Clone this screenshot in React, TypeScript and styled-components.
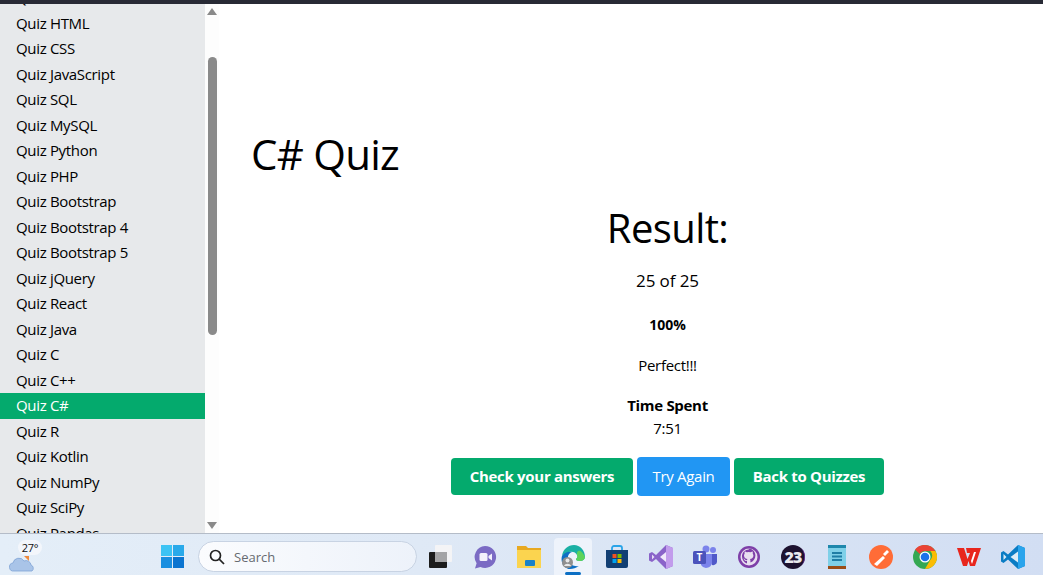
import React from "react";
import styled, { createGlobalStyle } from "styled-components";

const Global = createGlobalStyle`
  html, body { margin: 0; padding: 0; height: 100%; overflow: hidden; background: #fff; }
  #root { height: 100%; }
  * { box-sizing: border-box; }
`;
const FONT = `"Open Sans", "Noto Sans", sans-serif`;

const Page = styled.div`
  width: 1043px; height: 575px; display: flex; flex-direction: column; overflow: hidden;
  font-family: ${FONT}; color: #000;
`;
const TopBar = styled.div`height: 4px; background: #282a35; flex: none;`;
const Body = styled.div`flex: 1; display: flex; min-height: 0;`;
const Sidebar = styled.nav`width: 205px; flex: none; background: #e7e9eb; overflow: hidden;`;
const SideList = styled.ul`list-style: none; margin: -18.6px 0 0; padding: 0;`;
const SideItem = styled.li<{ $active?: boolean }>`
  height: 25.5px; line-height: 25.5px; padding-left: 16px; font-size: 15px; letter-spacing: -0.33px;
  white-space: nowrap;
  background: ${p => (p.$active ? "#04aa6d" : "transparent")};
  color: ${p => (p.$active ? "#fff" : "#000")};
`;
const ScrollBar = styled.div`
  width: 14px; flex: none; background: #fdfdfd; display: flex; flex-direction: column; align-items: center;
`;
const Arrow = styled.svg`width: 10px; height: 7px; flex: none; display: block; margin: 4px 0;`;
const Track = styled.div`flex: 1; width: 100%; padding: 38px 2px 183px 3px; display: flex;`;
const Thumb = styled.div`flex: 1; background: #8a8a8a; border-radius: 5px;`;
const Main = styled.main`flex: 1; display: flex; flex-direction: column; min-width: 0; padding: 123px 0 0 32px;`;
const Title = styled.h1`margin: 0; font-weight: 400; font-size: 42px; letter-spacing: -0.75px; line-height: 54px; color: #000;`;
const Result = styled.section`
  margin: 20px 0 0 41px; display: flex; flex-direction: column; align-items: center;
`;
const ResultTitle = styled.h2`margin: 0; font-weight: 400; font-size: 40px; letter-spacing: -0.6px; line-height: 54px;`;
const Score = styled.p`margin: 14px 0 0; font-size: 17px; line-height: 24px; letter-spacing: -0.1px;`;
const Percent = styled.p`margin: 22px 0 0; font-size: 14px; font-weight: 700; line-height: 20px; letter-spacing: 0;`;
const Verdict = styled.p`margin: 20px 0 0; font-size: 15px; line-height: 20px; letter-spacing: -0.3px;`;
const TimeLabel = styled.p`margin: 20px 0 0; font-size: 15px; font-weight: 700; line-height: 20px; letter-spacing: -0.3px;`;
const TimeValue = styled.p`margin: 3px 0 0; font-size: 15px; line-height: 20px; letter-spacing: -0.3px;`;
const Buttons = styled.div`margin-top: 19px; display: flex; gap: 4px; align-items: center;`;
const Button = styled.button<{ $blue?: boolean; $w: number }>`
  width: ${p => p.$w}px; height: ${p => (p.$blue ? 39 : 37)}px;
  border: 0; border-radius: 4px; padding: 0 0 2px; color: #fff; font-family: ${FONT}; font-size: 15px;
  letter-spacing: -0.3px;
  background: ${p => (p.$blue ? "#2196f3" : "#04aa6d")};
  font-weight: ${p => (p.$blue ? 400 : 700)};
`;
const Taskbar = styled.footer`
  height: 42px; flex: none; border-top: 1px solid #b4bcc8; padding-top: 4px;
  background: linear-gradient(90deg, #e4eef8 0%, #dfe9f6 40%, #d2def3 100%);
  display: flex; align-items: center;
`;
const Weather = styled.div`width: 161px; flex: none; padding: 13px 0 0 9px; display: flex; position: relative; height: 100%; align-items: center;`;
const Temp = styled.span`
  position: absolute; left: 18px; top: 2px; width: 24px; height: 15px; border-radius: 8px; background: #f3f6fb;
  font-size: 11px; line-height: 15px; text-align: center; color: #111; letter-spacing: -0.2px;
`;
const StartSlot = styled.div`width: 37px; flex: none; display: flex;`;
const SearchBox = styled.div`
  width: 219px; height: 31px; flex: none; border-radius: 16px; border: 1px solid #c8d3e3;
  background: linear-gradient(90deg, #fbfcfe, #edf2fa);
  display: flex; align-items: center; gap: 9px; padding-left: 10px;
  font-size: 13px; color: #666a70;
`;
const Tray = styled.div`display: flex; margin-left: 2px; height: 100%;`;
const Slot = styled.div<{ $active?: boolean }>`
  width: 44px; height: 100%; display: flex; align-items: center; justify-content: center;
  position: relative;
  &::before {
    content: ""; position: absolute; left: 3px; right: 3px; top: 0; bottom: 0;
    border-radius: 4px 4px 0 0; display: ${p => (p.$active ? "block" : "none")};
    background: #eef3fb;
  }
  &::after {
    content: ""; position: absolute; left: 14px; right: 14px; bottom: 0; height: 3px; border-radius: 2px;
    display: ${p => (p.$active ? "block" : "none")}; background: #0c6fc4;
  }
  svg { position: relative; z-index: 1; }
`;

const items = ["Quiz Excel","Quiz HTML","Quiz CSS","Quiz JavaScript","Quiz SQL","Quiz MySQL","Quiz Python","Quiz PHP","Quiz Bootstrap","Quiz Bootstrap 4","Quiz Bootstrap 5","Quiz jQuery","Quiz React","Quiz Java","Quiz C","Quiz C++","Quiz C#","Quiz R","Quiz Kotlin","Quiz NumPy","Quiz SciPy","Quiz Pandas"];

const Ico: React.FC<{ children: React.ReactNode }> = ({ children }) => (
  <svg width="24" height="24" viewBox="0 0 24 24">{children}</svg>
);

const icons: React.ReactNode[] = [
  <Ico key="copy"><rect x="0" y="7" width="18" height="16" rx="1" fill="#1c1c1c"/><rect x="6" y="0" width="17" height="17" rx="1" fill="#f4f4f6"/><rect x="6" y="7" width="12" height="10" fill="#a4a4a6"/></Ico>,
  <Ico key="meet"><path d="M12 1a11 11 0 1 1-4.500 21L2 23.500l1.600-5.300A11 11 0 0 1 12 1z" fill="#7b6bc4"/><rect x="6.500" y="8" width="8" height="8" rx="1.500" fill="#f3f1fb"/><path d="M15.500 11l3.500-2.500v7L15.500 13z" fill="#f3f1fb"/></Ico>,
  <Ico key="folder"><path d="M0 1h9l2 2h13v20H0z" fill="#e8a920"/><path d="M0 5h24v18H0z" fill="#fbd44f"/><rect x="8" y="15" width="10" height="6" rx="1" fill="#1b82c6"/></Ico>,
  <Ico key="edge"><path d="M1 11C2 4 7 0 13 0c6 0 11 5 11 12 0 2-2 4-5 4-3 0-4-1-4-2 1-1 2-2 1-4-1-3-5-4-8-3-3 1-6 3-7 4z" fill="#1bb0a4"/><path d="M24 12c0 2-2 4-5 4-3 0-4-1-4-2 1-1 2-2 1-4C15 5 20 3 24 12z" fill="#5ed35a"/><path d="M1 11c2-3 6-5 10-4-3 1-5 4-4 8 1 4 6 7 11 6-3 2-6 3-9 3C4 24-1 18 1 11z" fill="#0c6fc4"/><circle cx="6.500" cy="17.500" r="5.500" fill="#8f8f8f"/><circle cx="6.500" cy="15.500" r="2" fill="#e8e8e8"/><path d="M3 21c1-3 6-3 7 0z" fill="#e8e8e8"/></Ico>,
  <Ico key="store"><path d="M7 6V3a2 2 0 0 1 2-2h6a2 2 0 0 1 2 2v3" stroke="#2aa4e8" strokeWidth="1.800" fill="none"/><path d="M1 5h22v16a2 2 0 0 1-2 2H3a2 2 0 0 1-2-2z" fill="#123f73"/><rect x="7.500" y="9" width="4" height="4" fill="#f25022"/><rect x="12.500" y="9" width="4" height="4" fill="#7fba00"/><rect x="7.500" y="14" width="4" height="4" fill="#00a4ef"/><rect x="12.500" y="14" width="4" height="4" fill="#ffb900"/></Ico>,
  <Ico key="vs"><path d="M17 0l7 3v18l-7 3L7 14l-4 3-3-1.500v-7L3 7l4 3z" fill="#8a63c9"/><path d="M17 0l7 3v18l-7 3z" fill="#c29cec"/><path d="M17 7v10l-6-5z" fill="#f0e8fa"/><path d="M3 9.500v5l2.500-2.500z" fill="#e6dcf5"/></Ico>,
  <Ico key="teams"><circle cx="20" cy="5" r="3" fill="#7b83eb"/><circle cx="13" cy="4" r="3.500" fill="#7b83eb"/><path d="M16 9h8v8a4 4 0 0 1-5 3z" fill="#5059c9"/><path d="M8 9h11v9a6 6 0 0 1-11 2z" fill="#7b83eb"/><rect x="0" y="6" width="13" height="13" rx="1.500" fill="#4b53bc"/><text x="6.500" y="16" fontSize="10" fontWeight="700" fill="#fff" textAnchor="middle" fontFamily="Open Sans">T</text></Ico>,
  <Ico key="gh"><circle cx="12" cy="12" r="11" fill="#7e3fa8"/><circle cx="12" cy="12" r="8.500" fill="#e9dff0"/><path d="M12 4.500c-4 0-7 3-7 7 0 3 2 6 5 7v-2.500c-2 .4-2.500-1-2.800-1.500-.5-.6-1-.7-.4-1 .8 0 1.200 1 1.500 1.200.6.700 1.300.5 1.700.3.100-.5.300-.8.500-1-2-.2-3.500-1-3.500-3.500 0-.8.300-1.400.7-2-.1-.2-.3-1 .1-2 0 0 .7-.2 2.100.8a7 7 0 0 1 3.600 0c1.400-1 2.100-.8 2.100-.8.400 1 .2 1.800.1 2 .400.600.7 1.200.7 2 0 2.500-1.500 3.300-3.500 3.500.3.300.5.700.5 1.400v2.100c3-1 5-4 5-7 0-4-3-7-7-7z" fill="#7e3fa8"/></Ico>,
  <Ico key="23"><circle cx="12" cy="12" r="12" fill="#1d1230"/><path d="M20 3a12 12 0 0 1 0 18A14 14 0 0 0 20 3z" fill="#6b2fa0"/><text x="12" y="17.500" fontSize="16" fontWeight="800" fill="#e9e9ef" textAnchor="middle" fontFamily="Open Sans" letterSpacing="-.8">23</text></Ico>,
  <Ico key="notes"><rect x="3" y="0" width="18" height="23" fill="#7fd0e8"/><rect x="3" y="21" width="18" height="3" fill="#9a4d17"/><rect x="3" y="0" width="18" height="3" fill="#1f87ac"/><path d="M7 8h10M7 11.500h10M7 15h10" stroke="#1f7ea6" strokeWidth="1.800"/></Ico>,
  <Ico key="postman"><circle cx="12" cy="12" r="12" fill="#ff6c37"/><path d="M5 19l9-8 2 2-8 8z M14 9l4-4 2 2-4 4z" fill="#fff"/></Ico>,
  <Ico key="chrome"><circle cx="12" cy="12" r="12" fill="#34a853"/><path d="M12 0a12 12 0 0 1 10.400 6H12a6 6 0 0 0-5.200 3L2 4.500A12 12 0 0 1 12 0z" fill="#ea4335"/><path d="M22.400 6A12 12 0 0 1 12 24l5.200-9a6 6 0 0 0 0-9z" fill="#fbbc04"/><circle cx="12" cy="12" r="5.500" fill="#fff"/><circle cx="12" cy="12" r="4.300" fill="#1a73e8"/></Ico>,
  <Ico key="wps"><path d="M0 3h7l3.500 11L13 8h-3L9 3h15l-6 18h-5l-1.500-5-1.500 5H6z" fill="#e8261d"/><path d="M17 7l-3 9 1 3 4-12z" fill="#fff"/></Ico>,
  <Ico key="vscode"><path d="M17 0l7 3v18l-7 3-10-9.500L2.500 18 0 16.500v-9L2.500 6 7 9.500z" fill="#0a7cc4"/><path d="M17 0l7 3v18l-7 3z" fill="#2aa4ec"/><path d="M17 6.500v11L9.500 12z" fill="#dcecf7"/><path d="M2.500 9v6l3-3z" fill="#dcecf7"/></Ico>,
];

export default function App() {
  return (
    <Page>
      <Global />
      <TopBar />
      <Body>
        <Sidebar>
          <SideList>
            {items.map(t => <SideItem key={t} $active={t === "Quiz C#"}>{t}</SideItem>)}
          </SideList>
        </Sidebar>
        <ScrollBar>
          <Arrow viewBox="0 0 10 7"><path d="M5 0l5 7H0z" fill="#8a8a8a"/></Arrow>
          <Track><Thumb /></Track>
          <Arrow viewBox="0 0 10 7"><path d="M0 0h10L5 7z" fill="#8a8a8a"/></Arrow>
        </ScrollBar>
        <Main>
          <Title>C# Quiz</Title>
          <Result>
            <ResultTitle>Result:</ResultTitle>
            <Score>25 of 25</Score>
            <Percent>100%</Percent>
            <Verdict>Perfect!!!</Verdict>
            <TimeLabel>Time Spent</TimeLabel>
            <TimeValue>7:51</TimeValue>
            <Buttons>
              <Button $w={182}>Check your answers</Button>
              <Button $w={93} $blue>Try Again</Button>
              <Button $w={150}>Back to Quizzes</Button>
            </Buttons>
          </Result>
        </Main>
      </Body>
      <Taskbar>
        <Weather>
          <svg width="26" height="20" viewBox="0 0 26 20">
            <path d="M15 3l5 0 0 5z" fill="#f08a3c"/>
            <path d="M5 18a4 4 0 0 1-1-8 6 6 0 0 1 11-2 5 5 0 0 1 7 4 3.500 3.500 0 0 1 1 6z" fill="#a9c4e8" stroke="#7fa3d6" strokeWidth=".8"/>
          </svg>
          <Temp>27°</Temp>
        </Weather>
        <StartSlot>
          <svg width="23" height="23" viewBox="0 0 23 23">
            <rect width="11" height="11" fill="#3cc3f4"/><rect x="12" width="11" height="11" fill="#29a9ea"/>
            <rect y="12" width="11" height="11" fill="#1a8fe0"/><rect x="12" y="12" width="11" height="11" fill="#0a74d0"/>
          </svg>
        </StartSlot>
        <SearchBox>
          <svg width="16" height="16" viewBox="0 0 16 16" fill="none" stroke="#222" strokeWidth="1.700"><circle cx="6.500" cy="6.500" r="5"/><path d="M10.200 10.200L15 15"/></svg>
          Search
        </SearchBox>
        <Tray>
          {icons.map((ic, i) => <Slot key={i} $active={i === 3}>{ic}</Slot>)}
        </Tray>
      </Taskbar>
    </Page>
  );
}
